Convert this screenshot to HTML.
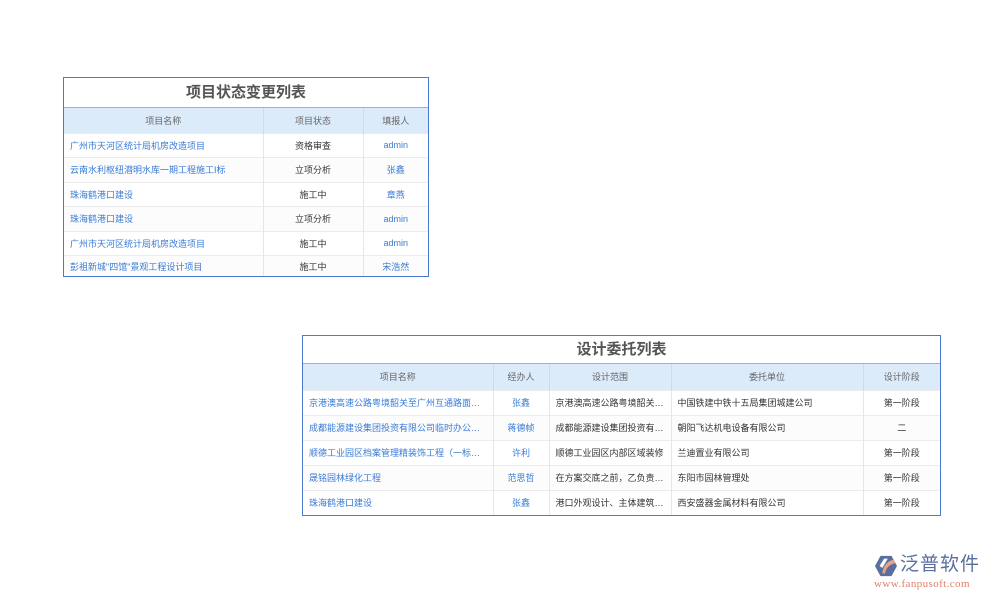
<!DOCTYPE html>
<html><head><meta charset="utf-8"><style>
body{margin:0;width:1000px;height:600px;background:#fff;font-family:"Liberation Sans","Noto Sans CJK SC",sans-serif;position:relative;overflow:hidden}
.t{position:absolute;border:1px solid #4a7bd0;box-sizing:border-box;background:#fff;overflow:hidden}
.t table{border-collapse:collapse;width:100%;table-layout:fixed}
.t td{font-size:9px;border-right:1px solid #e6e6e6;border-top:1px solid #ececec;white-space:nowrap;overflow:hidden;text-overflow:ellipsis;padding:0 6px;color:#333}
.t td:last-child{border-right:none}
.ttl{font-size:15px;font-weight:bold;color:#555;text-align:center;border-bottom:1px solid #8fb4e6}
.t tr:nth-child(odd) td{background:#fcfcfc}
.t table tr.h td{background:#dcebfa;color:#666;text-align:center;border-top:none;border-right:1px solid #c9dcf2}
.t table tr.h td:last-child{border-right:none}
.t td.b{color:#3a7bd5}.t td.c{text-align:center}
</style></head><body>
<div class="t" style="left:63px;top:77px;width:366px;height:200px">
<div class="ttl" style="height:29px;line-height:29px">项目状态变更列表</div>
<table><colgroup><col style="width:199px"><col style="width:100px"><col></colgroup>
<tr class="h" style="height:25px"><td>项目名称</td><td>项目状态</td><td>填报人</td></tr>
<tr style="height:24.5px"><td class="b">广州市天河区统计局机房改造项目</td><td class="c">资格审查</td><td class="c b">admin</td></tr>
<tr style="height:24.5px"><td class="b">云南水利枢纽潜明水库一期工程施工I标</td><td class="c">立项分析</td><td class="c b">张鑫</td></tr>
<tr style="height:24.5px"><td class="b">珠海鹤港口建设</td><td class="c">施工中</td><td class="c b">章燕</td></tr>
<tr style="height:24.5px"><td class="b">珠海鹤港口建设</td><td class="c">立项分析</td><td class="c b">admin</td></tr>
<tr style="height:24.5px"><td class="b">广州市天河区统计局机房改造项目</td><td class="c">施工中</td><td class="c b">admin</td></tr>
<tr style="height:22px"><td class="b">彭祖新城"四馆"景观工程设计项目</td><td class="c">施工中</td><td class="c b">宋浩然</td></tr>
</table></div>

<div class="t" style="left:302px;top:335px;width:639px;height:181px">
<div class="ttl" style="height:27px;line-height:27px">设计委托列表</div>
<table><colgroup><col style="width:190px"><col style="width:56px"><col style="width:122px"><col style="width:192px"><col></colgroup>
<tr class="h" style="height:26px"><td>项目名称</td><td>经办人</td><td>设计范围</td><td>委托单位</td><td>设计阶段</td></tr>
<tr style="height:25px"><td class="b">京港澳高速公路粤境韶关至广州互通路面改造工程</td><td class="c b">张鑫</td><td>京港澳高速公路粤境韶关至广州</td><td>中国铁建中铁十五局集团城建公司</td><td class="c">第一阶段</td></tr>
<tr style="height:25px"><td class="b">成都能源建设集团投资有限公司临时办公楼工程</td><td class="c b">蒋德帧</td><td>成都能源建设集团投资有限公司</td><td>朝阳飞达机电设备有限公司</td><td class="c">二</td></tr>
<tr style="height:25px"><td class="b">顺德工业园区档案管理精装饰工程（一标段）</td><td class="c b">许利</td><td>顺德工业园区内部区域装修</td><td>兰迪置业有限公司</td><td class="c">第一阶段</td></tr>
<tr style="height:25px"><td class="b">晟铭园林绿化工程</td><td class="c b">范思哲</td><td>在方案交底之前，乙负责方案</td><td>东阳市园林管理处</td><td class="c">第一阶段</td></tr>
<tr style="height:25px"><td class="b">珠海鹤港口建设</td><td class="c b">张鑫</td><td>港口外观设计、主体建筑设计</td><td>西安盛器金属材料有限公司</td><td class="c">第一阶段</td></tr>
</table></div>

<div style="position:absolute;left:872px;top:553px;width:122px;height:40px">
<svg width="24" height="22" viewBox="0 0 26 24" style="position:absolute;left:2px;top:2px">
<path d="M7 1 L19 1 L25 12 L19 23 L7 23 L1 12 Z" fill="#5a6fa0"/>
<path d="M9 20 C10 12 14 7 21 5 L23 9 C17 10 13 14 12 20 Z" fill="#e8a384"/>
<path d="M6 12 L11 4 L15 4 L9 14 Z" fill="#fff"/>
</svg>
<div style="position:absolute;left:28px;top:0;font-size:19px;color:#5a6fa0;letter-spacing:1px;line-height:24px">泛普软件</div>
<div style="position:absolute;left:2px;top:25px;font-size:11px;color:#d9826a;font-family:'Liberation Serif',serif;letter-spacing:0.4px">www.fanpusoft.com</div>
</div>
</body></html>
